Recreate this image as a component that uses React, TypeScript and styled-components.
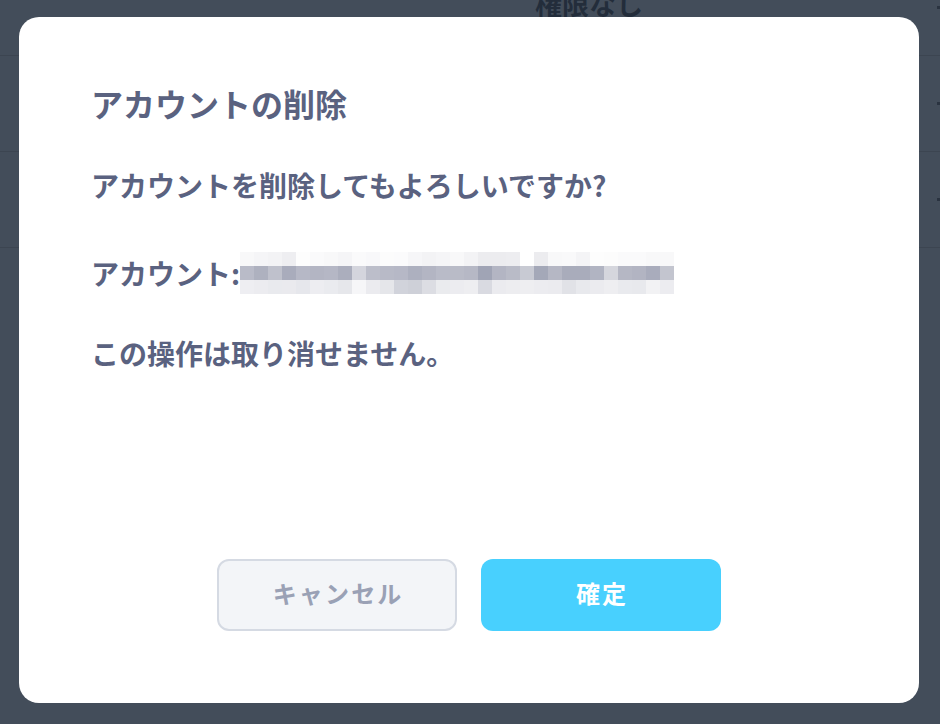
import React from "react";
import styled, { createGlobalStyle } from "styled-components";

const GlobalStyle = createGlobalStyle`
  html, body {
    margin: 0;
    padding: 0;
    background: #434d5a;
    overflow: hidden;
  }
  body {
    font-family: "Noto Sans CJK JP", "Noto Sans", sans-serif;
  }
`;

const Page = styled.div`
  width: 940px;
  height: 724px;
  overflow: hidden;
  background: #434d5a;
`;

const Table = styled.div`
  display: flex;
  flex-direction: column;
  margin-top: -40px;
`;

const Row = styled.div<{ last?: boolean }>`
  height: 95px;
  border-bottom: ${(p) => (p.last ? "none" : "1px solid #3c4551")};
  display: flex;
  align-items: center;
  padding-left: 535px;
  position: relative;
`;

const Cell = styled.span`
  font-size: 27px;
  font-weight: 700;
  color: #232d3b;
  line-height: 1;
  transform: translateY(-4px);
`;

const EdgeMark = styled.span`
  position: absolute;
  right: 0;
  top: 46px;
  width: 3px;
  height: 3px;
  background: #2a3340;
`;

const Overlay = styled.div`
  position: fixed;
  inset: 0;
  display: flex;
  padding: 17px 21px 21px 19px;
  box-sizing: border-box;
`;

const Modal = styled.div`
  flex: 1;
  background: #ffffff;
  border-radius: 20px;
  display: flex;
  flex-direction: column;
  padding: 84px 72px 72px 72px;
  box-sizing: border-box;
  color: #5a6280;
`;

const Title = styled.h2`
  margin: 0;
  font-size: 32px;
  font-weight: 700;
  line-height: 44px;
  margin-top: -20px;
`;

const Text = styled.p<{ gap: number }>`
  margin: 0;
  font-size: 28px;
  font-weight: 700;
  line-height: 40px;
  display: flex;
  align-items: center;
  margin-top: ${(p) => p.gap}px;
`;

const Mosaic = styled.svg`
  display: block;
  flex-shrink: 0;
`;

const Actions = styled.div`
  margin-top: auto;
  display: flex;
  justify-content: center;
  gap: 24px;
`;

const Button = styled.button<{ primary?: boolean }>`
  width: 240px;
  height: 72px;
  border-radius: 12px;
  font-family: "Noto Sans CJK JP", "Noto Sans", sans-serif;
  font-size: 24px;
  font-weight: 700;
  cursor: pointer;
  box-sizing: border-box;
  border: ${(p) => (p.primary ? "none" : "2px solid #d5dae3")};
  background: ${(p) => (p.primary ? "#48d0fe" : "#f3f5f8")};
  color: ${(p) => (p.primary ? "#ffffff" : "#9aa1b5")};
  letter-spacing: 0.09em;
  padding: 0 0 5px 0.09em;
`;

const top = [
  "#f8f8f9", "#f5f5f7", "#f3f3f5", "#eeeef1", "#fdfdfd", "#fafafb", "#f8f8f9", "#f5f5f7",
  "#fafafb", "#f8f8fa", "#fcfcfc", "#fbfbfc", "#f6f6f8", "#f3f3f5", "#f5f5f7", "#f8f8f9",
  "#f3f3f5", "#ececef", "#ececef", "#ededf0", "#ffffff", "#ececef", "#f8f8f9", "#f9f9fa",
  "#f4f4f6", "#fdfdfd", "#fcfcfc", "#fafafb", "#fafafb", "#f8f8f9", "#f8f8f9",
];
const mid = [
  "#b9bbc8", "#aeb1bf", "#bfc1cc", "#a9acbc", "#b6b8c6", "#b3b5c3", "#b5b7c5", "#abaebd",
  "#d4d5dd", "#bcbeca", "#b8bac7", "#b6b8c6", "#adb0bf", "#b3b5c3", "#b9bbc8", "#b9bbc7",
  "#b6b8c5", "#a0a4b5", "#b3b5c3", "#b9bbc7", "#c8cad3", "#a4a8b8", "#b5b7c4", "#a9acbb",
  "#a9acbb", "#b1b4c2", "#d5d6dd", "#b5b7c4", "#b2b4c2", "#a9acbc", "#c3c5cf",
];
const bot = [
  "#eeeef2", "#ececf0", "#e9eaee", "#eaeaee", "#e6e7ec", "#ededf1", "#eaebef", "#e6e7eb",
  "#f6f6f8", "#ebebef", "#e5e6ea", "#d1d3db", "#ced0d8", "#dcdde3", "#eaebee", "#ececf0",
  "#eeeef1", "#d9dae1", "#ebebef", "#ededf0", "#eeeef1", "#ececf0", "#ebebef", "#e1e2e7",
  "#e8e9ed", "#ebebef", "#eeeef1", "#e9eaee", "#e8e9ed", "#f2f2f4", "#ececf0",
];

const CELL_W = 14;
const CELL_H = 14;

function BlurredAccount() {
  const rows = [top, mid, bot];
  return (
    <Mosaic width={top.length * CELL_W} height={CELL_H * 3} viewBox={`0 0 ${top.length * CELL_W} ${CELL_H * 3}`}>
      {rows.map((r, ri) =>
        r.map((c, ci) => (
          <rect key={`${ri}-${ci}`} x={ci * CELL_W} y={ri * CELL_H} width={CELL_W} height={CELL_H} fill={c} />
        ))
      )}
    </Mosaic>
  );
}

export default function App() {
  return (
    <>
      <GlobalStyle />
      <Page>
        <Table>
          {[0, 1, 2, 3].map((i) => (
            <Row key={i} last={i === 3}>
              {i === 0 && <Cell>権限なし</Cell>}
              {i < 3 && <EdgeMark />}
            </Row>
          ))}
        </Table>
      </Page>
      <Overlay>
        <Modal>
          <Title>アカウントの削除</Title>
          <Text gap={40}>アカウントを削除してもよろしいですか?</Text>
          <Text gap={47}>
            アカウント:
            <BlurredAccount />
          </Text>
          <Text gap={39}>この操作は取り消せません。</Text>
          <Actions>
            <Button>キャンセル</Button>
            <Button primary>確定</Button>
          </Actions>
        </Modal>
      </Overlay>
    </>
  );
}
